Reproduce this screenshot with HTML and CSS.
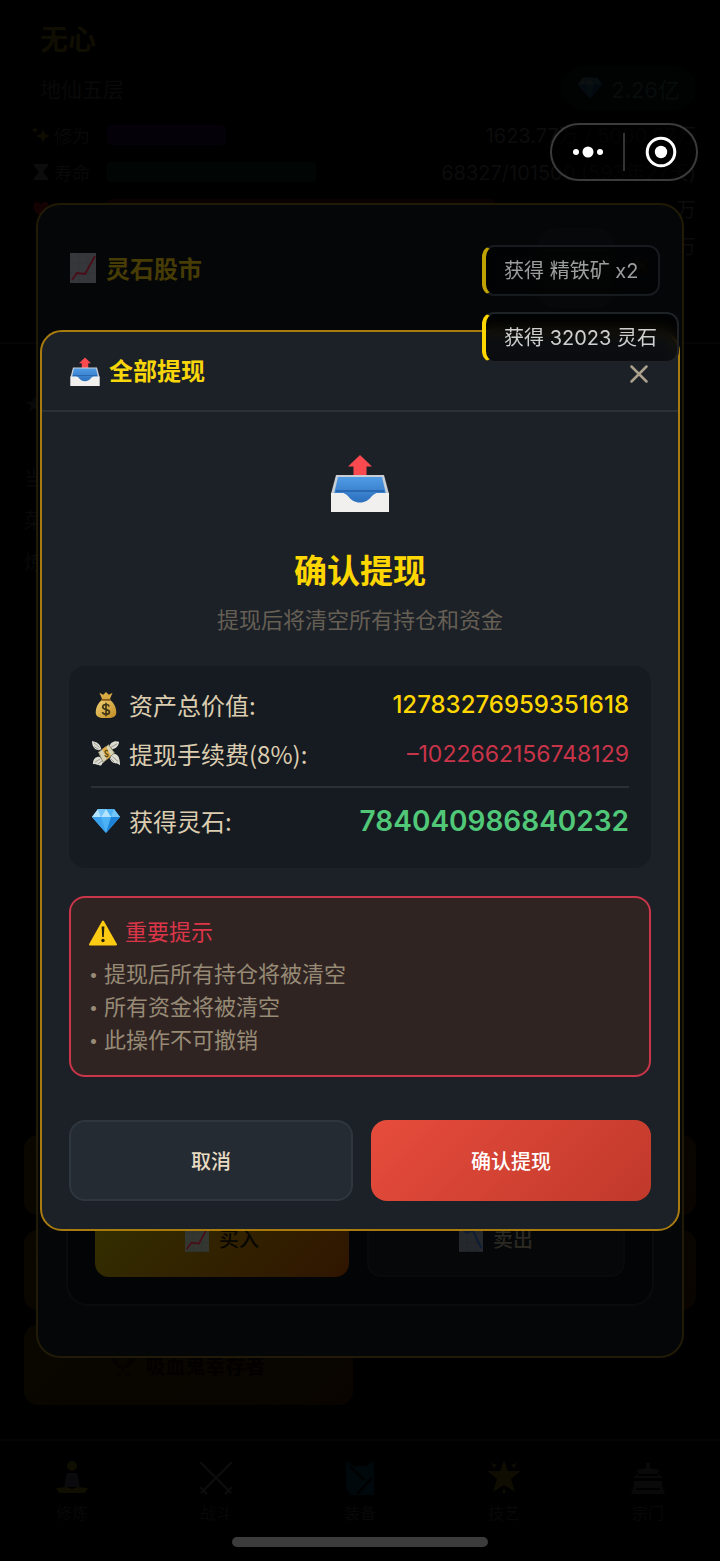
FILE: index.html
```html
<!DOCTYPE html>
<html lang="zh-CN">
<head>
  <meta charset="UTF-8" />
  <meta name="viewport" content="width=device-width, initial-scale=1.0" />
  <title>全部提现</title>
  <link rel="stylesheet" href="styles.css">
</head>
<body>

  <!-- Shared icons -->
  <svg class="defs" width="0" height="0">
    <defs>
      <linearGradient id="blueTray" x1="0" y1="0" x2="0" y2="1">
        <stop offset="0" stop-color="#4f9be6"/><stop offset="1" stop-color="#2a6dbb"/>
      </linearGradient>
      <linearGradient id="goldBag" x1="0" y1="0" x2="1" y2="1">
        <stop offset="0" stop-color="#f3d277"/><stop offset="1" stop-color="#c08a22"/>
      </linearGradient>
      <symbol id="outbox" viewBox="0 0 60 60">
        <path d="M30 1 42 12.500H36.500V24H23.500V12.500H18Z" fill="#fb4a4f"/>
        <path d="M6 21H54L59 40V58H1V40Z" fill="#c9ced4"/>
        <path d="M8 23H52L56 40V50H4V40Z" fill="url(#blueTray)"/>
        <path d="M6 37H54" stroke="#174f94" stroke-width="1"/>
        <path d="M1 39H12C19 39 19 48.500 30 48.500S41 39 48 39H59V57Q59 58 58 58H2Q1 58 1 57Z" fill="#f1f0ee"/>
      </symbol>
      <symbol id="bag" viewBox="0 0 30 30">
        <path d="M8 2 12 4 15 1 18 4 22 2 19 9H11Z" fill="#d9a944"/>
        <path d="M11 9H19C23 12 26 17 26 23 26 28 22 29 15 29S4 28 4 23C4 17 7 12 11 9Z" fill="url(#goldBag)"/>
        <path d="M10 9.500H20" stroke="#8a5a18" stroke-width="2"/>
        <path d="M18.500 16.500C18 15 16.500 14.500 15 14.500 13 14.500 11.500 15.500 11.500 17.200 11.500 21 18.700 19 18.700 22.500 18.700 24 17 25 15 25S11.500 24.200 11.200 22.700M15 12.500V27" fill="none" stroke="#3f3618" stroke-width="1.800"/>
      </symbol>
      <symbol id="moneyWings" viewBox="0 0 30 30">
        <path d="M10 10C9 4 5 2 0 1 0 6 2 10 7 11ZM19 7C19 3 24 0 29 2 29 6 26 9 22 10ZM8 18C3 18 1 21 1 26 5 25 6 28 10 27L13 22ZM22 15C27 14 30 18 30 27 27 24 24 26 21 23L19 20Z" fill="#dcdcd3"/>
        <path d="M2 3 8 8M2 7 7 10M27 4 20 8M3 24 9 20M6 26 11 22M28 23 22 18M24 24 20 20" stroke="#94948b" stroke-width="1"/>
        <path d="M7 13 18 5 24 14 12 24Z" fill="#d6d1b2" stroke="#8d8a70" stroke-width="1"/>
        <path d="M11 10 15 7 20 17 16 21Z" fill="#dfa93f"/>
        <path d="M17 12C15 10 13 12 14.500 14S18 15 17 17 13.500 16.500 13.500 16.500" fill="none" stroke="#594a22" stroke-width="1.300"/>
      </symbol>
      <symbol id="gem" viewBox="0 0 30 26">
        <path d="M7 1H23L29 9 15 25 1 9Z" fill="#4db2f5"/>
        <path d="M7 1 10 9H1ZM15 1 20 9H10Z" fill="#b4e3fd"/>
        <path d="M7 1H15L10 9ZM23 1 29 9H20Z" fill="#73c6f9"/>
        <path d="M1 9H10L15 25Z" fill="#3aa0ec"/>
        <path d="M20 9H29L15 25Z" fill="#1d83d8"/>
      </symbol>
      <symbol id="warn" viewBox="0 0 28 26">
        <path d="M14 1.500 27 24.500H1Z" fill="#fdcb12" stroke="#fdcb12" stroke-width="2" stroke-linejoin="round"/>
        <path d="M12.600 6.500H15.400L14.800 17H13.200Z" fill="#26210c"/>
        <circle cx="14" cy="20.500" r="1.700" fill="#26210c"/>
      </symbol>
      <symbol id="chartUp" viewBox="0 0 26 30">
        <path d="M0 0H26V30H0Z" fill="currentColor"/>
        <path d="M0 10H26M0 20H26M9 0V30M18 0V30" stroke="#000" stroke-opacity=".06"/>
        <path d="M2 27 7 20 15 21 25 3" fill="none" stroke="#4a0d17" stroke-width="1.800"/>
      </symbol>
      <symbol id="chartDown" viewBox="0 0 26 30">
        <path d="M0 0H26V30H0Z" fill="currentColor"/>
        <path d="M0 10H26M0 20H26M9 0V30M18 0V30" stroke="#000" stroke-opacity=".06"/>
        <path d="M3 5 8 9 15 7 24 26" fill="none" stroke="#0c1c38" stroke-width="1.800"/>
      </symbol>
    </defs>
  </svg>

  <!-- Game screen -->
  <div class="game">
    <header class="player">
      <h1 class="player-name">无心</h1>
      <div class="player-row">
        <span class="realm">地仙五层</span>
        <span class="stones"><svg class="stones-icon"><use href="#gem"/></svg>2.26亿</span>
      </div>
      <div class="stat">
        <svg class="stat-icon" viewBox="0 0 18 18"><path d="M11 3 13 8 18 10 13 12 11 17 9 12 4 10 9 8ZM3 1 4 3 6 4 4 5 3 7 2 5 0 4 2 3Z" fill="#0f0c02"/></svg>
        <span class="stat-label">修为</span>
        <div class="track"><div class="bar bar-exp"></div></div>
        <span class="stat-value">1623.77万 / 5000.27万</span>
      </div>
      <div class="stat">
        <svg class="stat-icon" viewBox="0 0 18 18"><path d="M2 1H16V3L11 9 16 15V17H2V15L7 9 2 3Z" fill="#0c0c0c"/></svg>
        <span class="stat-label">寿命</span>
        <div class="track"><div class="bar bar-life"></div></div>
        <span class="stat-value">68327/101500 (593年27天)</span>
      </div>
      <div class="stat">
        <svg class="stat-icon" viewBox="0 0 18 18"><path d="M9 17C-4 8 2-3 9 4 16-3 22 8 9 17Z" fill="#140202"/></svg>
        <span class="stat-label"></span>
        <div class="track"><div class="bar bar-blood"></div></div>
        <span class="stat-value">万</span>
      </div>
      <div class="stat">
        <span class="stat-label"></span>
        <span class="stat-value">万</span>
      </div>
    </header>

    <main class="scene">
      <div class="log">
        <p class="log-head">★</p>
        <p>当</p>
        <p>菜</p>
        <p>炼</p>
      </div>
      <div class="actions">
        <button type="button" class="action"></button>
        <button type="button" class="action"></button>
        <button type="button" class="action"></button>
        <button type="button" class="action"></button>
        <button type="button" class="action">
          <svg class="action-icon" viewBox="0 0 24 24" fill="none" stroke="#040300" stroke-width="3"><path d="M6 3H18V9Q18 14 12 14T6 9ZM6 5H2Q2 11 7 11M18 5H22Q22 11 17 11M12 14V19M5 21H10M14 21H19"/></svg>
          吸血鬼幸存者
        </button>
      </div>
    </main>

    <nav class="tabs">
      <a class="tab" href="#">
        <svg class="tab-icon" viewBox="0 0 36 36"><circle cx="18" cy="6" r="5" fill="#0f0e01"/><path d="M13 13H23L26 27H10Z" fill="#0a0a0c"/><path d="M2 28 12 27 18 29 24 27 34 28 31 33H5Z" fill="#0f0e01"/></svg>
        修炼
      </a>
      <a class="tab" href="#">
        <svg class="tab-icon" viewBox="0 0 36 36" stroke="#0d0d0d" stroke-width="2"><path d="M2 2 33 33M34 2 3 33M2 27 9 34M34 27 27 34"/></svg>
        战斗
      </a>
      <a class="tab" href="#">
        <svg class="tab-icon" viewBox="0 0 36 36"><path d="M4 1 12 6 24 6 32 1V35H8L4 28Z" fill="#01080b"/><path d="M8 6 22 20M15 34 30 18" stroke="#000" stroke-width="2"/></svg>
        装备
      </a>
      <a class="tab" href="#">
        <svg class="tab-icon" viewBox="0 0 36 36" fill="#0f0c02"><path d="M18 0 22 11 35 11 25 19 29 32 18 25 7 32 11 19 1 11 14 11ZM5 3 11 5 8 8ZM31 3 25 5 28 8ZM16 33 18 28 20 33Z"/></svg>
        技艺
      </a>
      <a class="tab" href="#">
        <svg class="tab-icon" viewBox="0 0 36 36" fill="#090909"><path d="M16 3H20V8L30 10 27 13 33 18H3L9 13 6 10 16 8ZM4 21H32V25L35 34H1L4 25Z"/><path d="M8 15H28M6 29H30" stroke="#000" stroke-width="2"/></svg>
        宗门
      </a>
    </nav>
  </div>

  <!-- Stock market popup -->
  <div class="overlay">
    <section class="market">
      <header class="market-head">
        <h2 class="market-title"><svg class="chart-icon"><use href="#chartUp"/></svg>灵石股市</h2>
        <button type="button" class="market-tool" aria-label="刷新"></button>
        <button type="button" class="market-close" aria-label="关闭">
          <svg viewBox="0 0 18 18" width="16" height="16"><path d="M1.500 1.500 16.500 16.500M16.500 1.500 1.500 16.500" stroke="#18130a" stroke-width="2.500"/></svg>
        </button>
      </header>
      <div class="market-card">
        <button type="button" class="trade trade-buy"><svg class="trade-icon"><use href="#chartUp"/></svg>买入</button>
        <button type="button" class="trade trade-sell"><svg class="trade-icon"><use href="#chartDown"/></svg>卖出</button>
      </div>
    </section>
  </div>

  <!-- Withdraw dialog -->
  <div class="overlay">
    <section class="dialog" role="dialog" aria-labelledby="dialogTitle">
      <header class="dialog-head">
        <svg class="head-icon"><use href="#outbox"/></svg>
        <h2 class="dialog-title" id="dialogTitle">全部提现</h2>
        <button type="button" class="dialog-close" aria-label="关闭">
          <svg viewBox="0 0 18 18" width="18" height="18"><path d="M1.500 1.500 16.500 16.500M16.500 1.500 1.500 16.500" stroke="#aaa08c" stroke-width="2.500" stroke-linecap="round"/></svg>
        </button>
      </header>
      <div class="dialog-body">
        <div class="intro">
          <svg class="intro-icon"><use href="#outbox"/></svg>
          <h3 class="intro-title">确认提现</h3>
          <p class="intro-text">提现后将清空所有持仓和资金</p>
        </div>

        <div class="summary">
          <div class="row">
            <svg class="row-icon"><use href="#bag"/></svg>
            <span class="row-label">资产总价值:</span>
            <span class="amount amount-total">12783276959351618</span>
          </div>
          <div class="row">
            <svg class="row-icon"><use href="#moneyWings"/></svg>
            <span class="row-label">提现手续费(8%):</span>
            <span class="amount amount-fee">–1022662156748129</span>
          </div>
          <div class="row row-result">
            <svg class="row-icon"><use href="#gem"/></svg>
            <span class="row-label">获得灵石:</span>
            <span class="amount amount-result">784040986840232</span>
          </div>
        </div>

        <div class="notice">
          <h4 class="notice-title"><svg class="notice-icon"><use href="#warn"/></svg>重要提示</h4>
          <ul class="notice-list">
            <li>提现后所有持仓将被清空</li>
            <li>所有资金将被清空</li>
            <li>此操作不可撤销</li>
          </ul>
        </div>

        <div class="buttons">
          <button type="button" class="btn btn-cancel">取消</button>
          <button type="button" class="btn btn-confirm">确认提现</button>
        </div>
      </div>
    </section>
  </div>

  <!-- Toasts -->
  <div class="toasts">
    <div class="toast toast-fading">获得 精铁矿 x2</div>
    <div class="toast">获得 32023 灵石</div>
  </div>

  <!-- Mini program capsule -->
  <div class="capsule">
    <button type="button" class="capsule-btn" aria-label="更多">
      <svg width="32" height="12" viewBox="0 0 32 12" fill="#fff"><circle cx="4" cy="6" r="3"/><circle cx="16" cy="6" r="5.500"/><circle cx="28" cy="6" r="3"/></svg>
    </button>
    <button type="button" class="capsule-btn capsule-exit" aria-label="关闭小程序">
      <svg width="32" height="32" viewBox="0 0 32 32"><circle cx="16" cy="16" r="13.800" fill="none" stroke="#fff" stroke-width="3"/><circle cx="16" cy="16" r="6.200" fill="#fff"/></svg>
    </button>
  </div>
  <div class="home-bar"></div>

</body>
</html>
```

FILE: styles.css
```css
* {
  box-sizing: border-box;
}

body {
  margin: 0;
  background: #000;
  font-family: Inter, 'Noto Sans CJK SC', sans-serif;
}

h1, h2, h3, h4, p, ul {
  margin: 0;
  padding: 0;
}

button {
  font-family: inherit;
  border: none;
  padding: 0;
  background: none;
  cursor: pointer;
}

.defs {
  position: absolute;
}

/* game screen */
.game {
  min-height: 100vh;
  display: flex;
  flex-direction: column;
  color: #090909;
}

.player {
  height: 344px;
  padding: 20px 24px 0 32px;
  border-bottom: 2px solid #050505;
}

.player-name {
  padding-left: 8px;
  font-size: 28px;
  line-height: 40px;
  color: #100e02;
}

.player-row {
  display: flex;
  align-items: center;
  justify-content: space-between;
  height: 56px;
  padding-left: 8px;
}

.realm {
  font-size: 21px;
}

.stones {
  display: flex;
  align-items: center;
  gap: 8px;
  height: 44px;
  padding: 0 16px;
  border-radius: 22px;
  background: #010202;
  font-size: 22px;
  color: #070c0c;
}

.stones-icon {
  width: 26px;
  height: 24px;
  opacity: 0.06;
}

.stat {
  display: flex;
  align-items: center;
  height: 37px;
  font-size: 18px;
}

.stat-icon {
  width: 18px;
  height: 18px;
  margin-right: 4px;
}

.stat-label {
  width: 53px;
}

.track {
  flex: 1;
  height: 20px;
}

.bar {
  height: 100%;
  border-radius: 4px;
}

.bar-exp {
  width: 119px;
  background: #050109;
}

.bar-life {
  width: 209px;
  background: #010604;
}

.bar-blood {
  width: 388px;
  background: #0a0101;
}

.stat-value {
  margin-left: auto;
  font-size: 20px;
  color: #0c0c0c;
}

.scene {
  flex: 1;
  display: flex;
  flex-direction: column;
  justify-content: space-between;
  padding: 40px 24px 34px;
}

.log {
  font-size: 20px;
  line-height: 42px;
  color: #090909;
}

.log-head {
  margin-bottom: 32px;
}

.actions {
  display: grid;
  grid-template-columns: 1fr 1fr;
  gap: 15px;
}

.action {
  display: flex;
  align-items: center;
  justify-content: center;
  gap: 10px;
  height: 80px;
  border-radius: 14px;
  background: linear-gradient(135deg, #090700, #090400);
  font-size: 20px;
  font-weight: bold;
  color: #020100;
}

.action-icon {
  width: 24px;
  height: 24px;
}

.tabs {
  display: flex;
  height: 122px;
  padding-top: 19px;
  border-top: 2px solid #050505;
}

.tab {
  flex: 1;
  display: flex;
  flex-direction: column;
  align-items: center;
  gap: 4px;
  font-size: 16px;
  color: #080808;
  text-decoration: none;
}

.tab-icon {
  width: 36px;
  height: 36px;
}

/* popups */
.overlay {
  position: fixed;
  inset: 0;
  display: flex;
  align-items: center;
  justify-content: center;
}

.market {
  display: flex;
  flex-direction: column;
  justify-content: space-between;
  width: 90%;
  min-height: 74vh;
  padding: 0 28px 50px;
  border: 2px solid #211a06;
  border-radius: 24px;
  background: #040608;
}

.market-head {
  display: flex;
  align-items: center;
  height: 126px;
  padding-left: 4px;
}

.market-title {
  flex: 1;
  display: flex;
  align-items: center;
  gap: 10px;
  font-size: 24px;
  color: #463c04;
}

.chart-icon {
  width: 26px;
  height: 30px;
  color: #36373a;
}

.market-tool {
  width: 76px;
  height: 80px;
  border-radius: 16px;
  background: #070809;
}

.market-close {
  width: 40px;
  padding-left: 16px;
}

.market-card {
  display: flex;
  gap: 18px;
  padding: 27px;
  border: 2px solid #090b0d;
  border-radius: 22px;
  background: #030405;
}

.trade {
  flex: 1;
  display: flex;
  align-items: center;
  justify-content: center;
  gap: 10px;
  height: 78px;
  border-radius: 14px;
  font-size: 20px;
  font-weight: 500;
}

.trade-buy {
  background: linear-gradient(135deg, #333000, #301500);
  color: #080600;
}

.trade-buy .trade-icon {
  color: #343632;
}

.trade-sell {
  border: 2px solid #080a0c;
  background: #050709;
  color: #2b2822;
}

.trade-sell .trade-icon {
  color: #25282c;
}

.trade-icon {
  width: 24px;
  height: 28px;
}

/* withdraw dialog */
.dialog {
  width: calc(100% - 80px);
  border: 2px solid #a87b0f;
  border-radius: 22px;
  background: #1c2128;
}

.dialog-head {
  display: flex;
  align-items: center;
  gap: 8px;
  padding: 22px 27px 20px;
  border-bottom: 2px solid #2b3037;
}

.head-icon {
  width: 32px;
  height: 30px;
}

.dialog-title {
  flex: 1;
  font-size: 24px;
  line-height: 36px;
  color: #f8d60a;
}

.dialog-close {
  align-self: flex-end;
  height: 32px;
  padding: 0 3px;
}

.dialog-close svg {
  display: block;
}

.dialog-body {
  padding: 42px 27px 28px;
}

.intro {
  text-align: center;
}

.intro-icon {
  display: block;
  width: 60px;
  height: 60px;
  margin: 0 auto;
}

.intro-title {
  margin-top: 32px;
  font-size: 33px;
  line-height: 50px;
  color: #ffd700;
}

.intro-text {
  margin-top: 8px;
  font-size: 22px;
  line-height: 33px;
  color: #665f54;
}

.summary {
  margin-top: 29px;
  padding: 22px 22px 30px;
  border-radius: 16px;
  background: #161b21;
}

.row {
  display: flex;
  align-items: center;
  gap: 8px;
  height: 34px;
  margin-bottom: 15px;
  font-size: 24px;
}

.row-icon {
  width: 30px;
  height: 28px;
}

.row-label {
  font-family: 'Noto Sans CJK SC', sans-serif;
  line-height: 34px;
  color: #dccdb0;
}

.amount {
  margin-left: auto;
  line-height: 34px;
}

.amount-total {
  font-weight: 500;
  color: #ffd700;
}

.amount-fee {
  font-size: 23px;
  color: #c93449;
}

.amount-result {
  font-size: 28px;
  font-weight: 600;
  color: #50c878;
}

.row-result {
  height: 52px;
  margin-bottom: 0;
  padding-top: 16px;
  border-top: 2px solid #2b3037;
}

.notice {
  margin-top: 28px;
  padding: 18px;
  border: 2px solid #c93549;
  border-radius: 16px;
  background: #302423;
  font-size: 22px;
  line-height: 33px;
}

.notice-title {
  display: flex;
  align-items: center;
  gap: 8px;
  margin-bottom: 9px;
  font-size: 22px;
  font-weight: normal;
  color: #dc3549;
}

.notice-icon {
  width: 28px;
  height: 26px;
}

.notice-list {
  list-style: none;
  color: #978b75;
}

.notice-list li {
  display: flex;
}

.notice-list li::before {
  content: '•';
  width: 15px;
  font-size: 16px;
}

.buttons {
  display: flex;
  gap: 18px;
  margin-top: 43px;
}

.btn {
  flex: 1 1 0;
  height: 81px;
  border-radius: 16px;
  font-size: 20px;
  font-weight: 500;
}

.btn-cancel {
  border: 2px solid #30363e;
  background: #242b32;
  color: #e8dcc3;
}

.btn-confirm {
  background: linear-gradient(135deg, #e74c3c, #c0392b);
  color: #fff;
}

/* toasts */
.toasts {
  position: fixed;
  top: 245px;
  right: 41px;
  display: flex;
  flex-direction: column;
  align-items: flex-start;
  gap: 16px;
}

.toast {
  padding: 10px 20px 9px 18px;
  border: 2px solid #1e2226;
  border-left: 4px solid #ffd700;
  border-radius: 12px;
  background: rgba(0, 0, 0, 0.6);
  backdrop-filter: blur(6px);
  font-size: 20px;
  line-height: 28px;
  color: #cfcfcf;
}

.toast-fading {
  opacity: 0.75;
}

/* mini program capsule */
.capsule {
  position: fixed;
  top: 123px;
  right: 22px;
  display: flex;
  align-items: center;
  width: 148px;
  height: 58px;
  border: 2px solid #3b3b3b;
  border-radius: 29px;
  background: rgba(0, 0, 0, 0.6);
}

.capsule-btn {
  flex: 1 1 0;
  display: flex;
  align-items: center;
  justify-content: center;
  height: 38px;
}

.capsule-exit {
  border-left: 2px solid #333;
}

.home-bar {
  position: fixed;
  bottom: 14px;
  left: 50%;
  width: 256px;
  height: 10px;
  margin-left: -128px;
  border-radius: 5px;
  background: #3c3c3c;
}
```
